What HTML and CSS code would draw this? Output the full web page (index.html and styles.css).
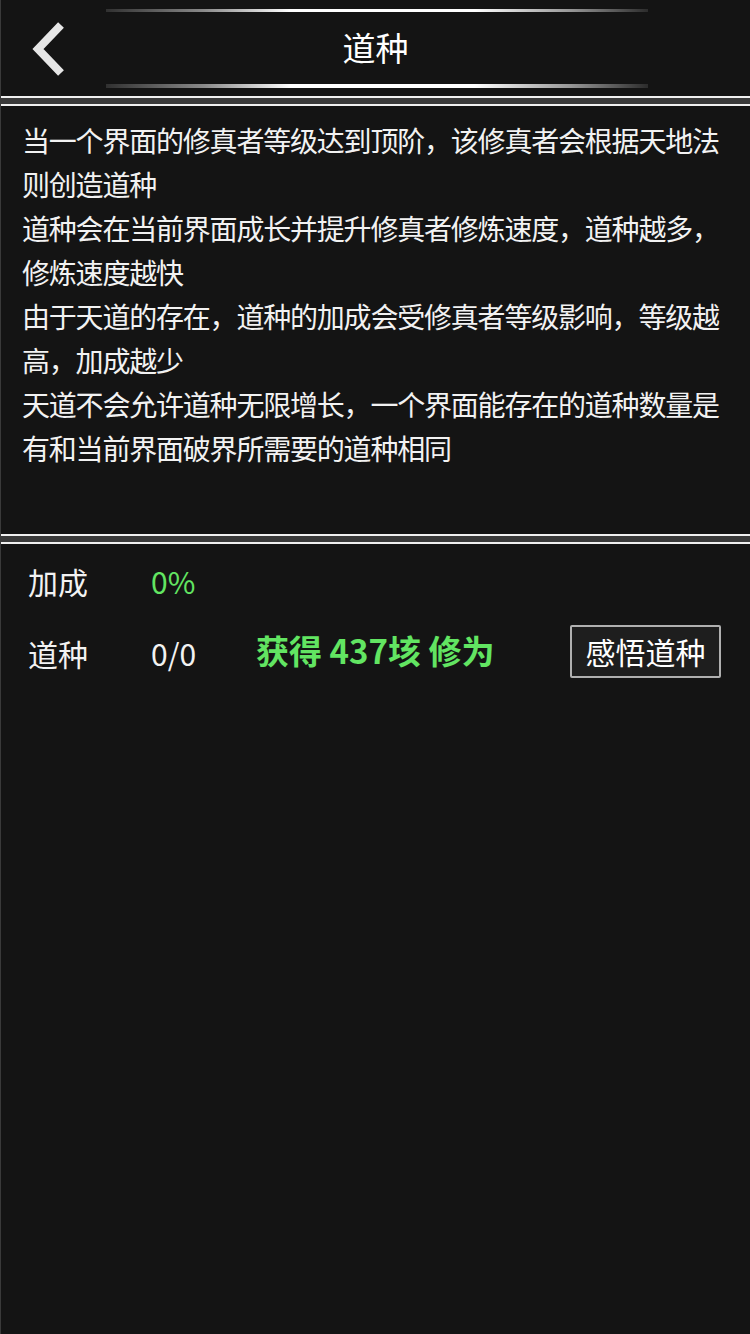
FILE: index.html
```html
<!DOCTYPE html>
<html lang="zh">
<head>
<meta charset="utf-8">
<link rel="stylesheet" href="styles.css">
</head>
<body>
<div class="page">
  <header class="header">
    <div class="glow glow-top"></div>
    <div class="header-main">
      <svg class="back" width="40" height="56" viewBox="0 0 40 56">
        <path d="M31 3 L8 27 L31 51" fill="none" stroke="#e6e6e6" stroke-width="8" stroke-linecap="butt" stroke-linejoin="miter"/>
      </svg>
      <h1 class="title">道种</h1>
    </div>
    <div class="glow glow-bottom"></div>
  </header>
  <div class="sep"></div>
  <section class="desc">
    <p>当一个界面的修真者等级达到顶阶，该修真者会根据天地法则创造道种</p>
    <p>道种会在当前界面成长并提升修真者修炼速度，道种越多，修炼速度越快</p>
    <p>由于天道的存在，道种的加成会受修真者等级影响，等级越高，加成越少</p>
    <p>天道不会允许道种无限增长，一个界面能存在的道种数量是有和当前界面破界所需要的道种相同</p>
  </section>
  <div class="sep"></div>
  <section class="stats">
    <div class="row row-bonus">
      <span class="label">加成</span>
      <span class="value green">0%</span>
    </div>
    <div class="row row-seed">
      <span class="label">道种</span>
      <span class="value">0/0</span>
      <span class="gain">获得 437垓 修为</span>
      <button class="btn">感悟道种</button>
    </div>
  </section>
</div>
</body>
</html>
```
FILE: styles.css
```css
html, body {
  margin: 0;
  padding: 0;
  background: #141414;
}
body {
  font-family: "Noto Sans CJK SC", "Noto Sans", sans-serif;
  color: #f2f2f2;
}
.page {
  width: 750px;
  height: 1334px;
  box-sizing: border-box;
  border-left: 1px solid #3a3a3a;
  background: #141414;
  display: flex;
  flex-direction: column;
}
.header {
  height: 96px;
  flex: none;
  display: flex;
  flex-direction: column;
  align-items: center;
}
.glow {
  flex: none;
  width: 542px;
  height: 3px;
  background: linear-gradient(90deg, rgba(255,255,255,0.12) 0%, rgba(255,255,255,0.5) 18%, #ffffff 34%, #ffffff 68%, rgba(255,255,255,0.55) 86%, rgba(255,255,255,0.1) 100%);
  margin-left: 2px;
}
.glow-top {
  margin-top: 9px;
}
.glow-bottom {
  height: 4px;
}
.header-main {
  flex: none;
  width: 100%;
  height: 72px;
  position: relative;
  display: flex;
  align-items: center;
  justify-content: center;
}
.back {
  position: absolute;
  left: 29px;
  top: 10px;
}
.title {
  margin: 0;
  font-size: 33px;
  font-weight: 400;
  line-height: 40px;
  color: #ffffff;
  margin-top: -3px;
}
.sep {
  height: 6px;
  background: #3a3a3a;
  border-top: 2px solid #f0f0f0;
  border-bottom: 2px solid #f0f0f0;
  flex: none;
}
.desc {
  height: 428px;
  flex: none;
  box-sizing: border-box;
  padding: 12px 8px 0 21px;
  font-size: 28px;
  line-height: 44px;
  letter-spacing: -1.2px;
}
.desc p {
  margin: 0;
}
.stats {
  padding: 15px 28px 0 27px;
}
.row {
  display: flex;
  align-items: center;
  font-size: 30px;
}
.row-bonus {
  height: 44px;
}
.row-seed {
  margin-top: 22px;
  height: 56px;
}
.label {
  width: 123px;
  flex: none;
}
.value {
  width: 105px;
  flex: none;
}
.green {
  color: #62e562;
}
.gain {
  color: #62e562;
  font-weight: 700;
  font-size: 33px;
  flex: 1;
  margin-top: -6px;
}
.btn {
  font-family: "Noto Sans CJK SC", "Noto Sans", sans-serif;
  font-size: 30px;
  color: #ffffff;
  background: #1e1e1e;
  border: 2px solid #b0b0b0;
  border-radius: 2px;
  width: 151px;
  height: 53px;
  padding: 0;
  margin-right: 1px;
  margin-top: -3px;
  line-height: 49px;
}
```
